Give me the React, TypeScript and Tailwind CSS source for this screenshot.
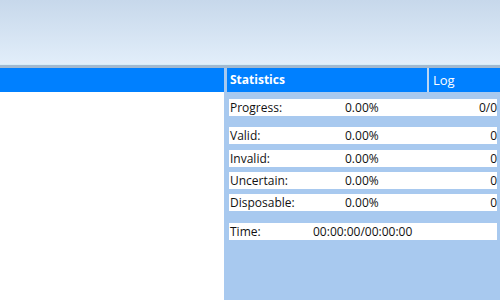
import React from 'react';

interface StatRow {
    label: string;
    percent?: string;
    count?: string;
    time?: string;
    gapTop: string;
}

const rows: StatRow[] = [
    { label: 'Progress:', percent: '0.00%', count: '0/0', gapTop: 'mt-[7px]' },
    { label: 'Valid:', percent: '0.00%', count: '0', gapTop: 'mt-[11px]' },
    { label: 'Invalid:', percent: '0.00%', count: '0', gapTop: 'mt-[6px]' },
    { label: 'Uncertain:', percent: '0.00%', count: '0', gapTop: 'mt-[5px]' },
    { label: 'Disposable:', percent: '0.00%', count: '0', gapTop: 'mt-[5px]' },
    { label: 'Time:', time: '00:00:00/00:00:00', gapTop: 'mt-[12px]' },
];

const App: React.FC = () => {
    return (
        <div
            className="w-[500px] h-[300px] flex flex-col overflow-hidden text-[12px] text-[#111]"
            style={{ fontFamily: '"Open Sans", "Noto Sans", sans-serif' }}
        >
            {/* title area */}
            <div className="h-[64px] bg-gradient-to-b from-[#c7d8eb] to-[#e2eefa]" />
            <div className="h-[1px] bg-[#d6edf8]" />
            <div className="h-[3px] bg-[#a2b9cf]" />

            <div className="flex flex-1">
                {/* left panel */}
                <div className="w-[224px] flex flex-col">
                    <div className="h-[24px] bg-[#0080ff]" />
                    <div className="flex-1 bg-white" />
                </div>

                {/* statistics panel */}
                <div className="flex-1 flex flex-col bg-[#a8c9ef] pl-[3px]">
                    <div className="h-[24px] flex gap-[2px] bg-[#bcd6f3]">
                        <div className="w-[200px] bg-[#0080ff] text-white font-bold flex items-center pl-[3px] leading-none">
                            Statistics
                        </div>
                        <div className="flex-1 bg-[#0080ff] text-white flex items-center pl-[4px] leading-none text-[13px]">
                            Log
                        </div>
                    </div>

                    <div className="flex flex-col pl-[2px] pr-[3px]">
                        {rows.map((row) => (
                            <div
                                key={row.label}
                                className={`${row.gapTop} h-[17px] bg-white flex items-center leading-none`}
                            >
                                <span className="w-[84px] pl-[1px]">{row.label}</span>
                                {row.time ? (
                                    <span>{row.time}</span>
                                ) : (
                                    <>
                                        <span className="ml-[32px]">{row.percent}</span>
                                        <span className="flex-1 text-right">{row.count}</span>
                                    </>
                                )}
                            </div>
                        ))}
                    </div>
                </div>
            </div>
        </div>
    );
};

export default App;
